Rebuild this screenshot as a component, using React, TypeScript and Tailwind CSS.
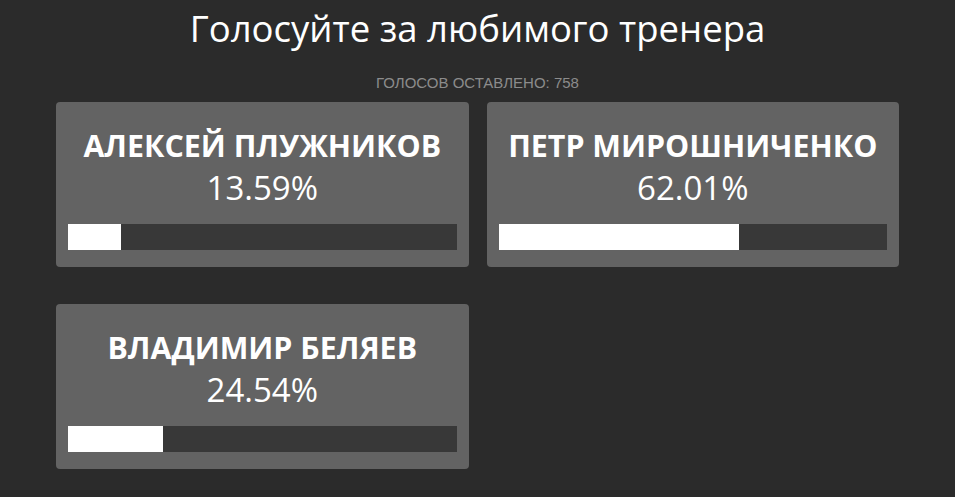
import React from 'react';

const coaches = [
  { name: 'АЛЕКСЕЙ ПЛУЖНИКОВ', percent: 13.59 },
  { name: 'ПЕТР МИРОШНИЧЕНКО', percent: 62.01 },
  { name: 'ВЛАДИМИР БЕЛЯЕВ', percent: 24.54 },
];

const App: React.FC = () => {
  return (
    <div className="min-h-screen w-full bg-[#2b2b2b] font-['Open_Sans',sans-serif] text-white">
      {/* заголовок */}
      <h1 className="pt-[3px] text-center text-[36.5px] leading-[50px]">Голосуйте за любимого тренера</h1>
      <p className="mt-[22px] text-center font-['Liberation_Sans',Arial,sans-serif] text-[15px] leading-[16px] text-[#8c8c8c]">
        ГОЛОСОВ ОСТАВЛЕНО: 758
      </p>

      {/* карточки */}
      <div className="mx-auto mt-[11px] grid w-[843px] grid-cols-2 gap-x-[18px] gap-y-[37px]">
        {coaches.map((c, i) => (
          <div key={i} className="flex h-[165px] flex-col rounded-[4px] bg-[#636363] px-[12px] pb-[17px]">
            <div className="pt-[24px] text-center text-[30.4px] font-bold leading-[40px]">{c.name}</div>
            <div className="text-center text-[33px] leading-[44px]">{c.percent.toFixed(2)}%</div>
            <div className="mt-auto h-[26px] w-full bg-[#383838]">
              <div className="h-full bg-white" style={{ width: `${c.percent}%` }} />
            </div>
          </div>
        ))}
      </div>
    </div>
  );
};

export default App;
